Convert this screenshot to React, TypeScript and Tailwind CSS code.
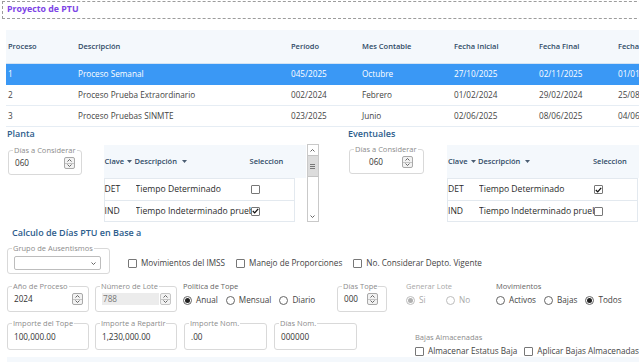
import type { ReactNode } from "react";

// Pantalla "Proyecto de PTU": lista de procesos arriba, parámetros de cálculo abajo.

const procesos = [
  { id: "1", desc: "Proceso Semanal", periodo: "045/2025", mes: "Octubre", ini: "27/10/2025", fin: "02/11/2025", pago: "01/01/2026" },
  { id: "2", desc: "Proceso Prueba Extraordinario", periodo: "002/2024", mes: "Febrero", ini: "01/02/2024", fin: "29/02/2024", pago: "25/08/2024" },
  { id: "3", desc: "Proceso Pruebas SINMTE", periodo: "023/2025", mes: "Junio", ini: "02/06/2025", fin: "08/06/2025", pago: "04/06/2025" },
];

function Chevron({ up }: { up?: boolean }) {
  return (
    <svg width="5" height="3" viewBox="0 0 5 3" className="block">
      <path d={up ? "M0.5 2.5 L2.5 0.5 L4.5 2.5" : "M0.5 0.5 L2.5 2.5 L4.5 0.5"} fill="none" stroke="#555" strokeWidth="0.9" />
    </svg>
  );
}

function Spinner({ className = "" }: { className?: string }) {
  return (
    <div className={`flex h-[12px] w-[11px] shrink-0 flex-col rounded-[2px] border border-[#a9a9a9] bg-[#f2f2f2] ${className}`}>
      <div className="flex flex-1 items-center justify-center border-b border-[#c4c4c4]">
        <Chevron up />
      </div>
      <div className="flex flex-1 items-center justify-center">
        <Chevron />
      </div>
    </div>
  );
}

function Field({ label, className = "", children }: { label: string; className?: string; children: ReactNode }) {
  return (
    <fieldset className={`shrink-0 rounded-[3px] border border-[#d9d9d9] px-[4px] ${className}`}>
      <legend className="whitespace-nowrap px-[1px] text-[7.5px] leading-[10px] text-[#8c8c8c]">{label}</legend>
      <div className="flex items-center pl-[2px] pt-[2px]">{children}</div>
    </fieldset>
  );
}

function Check({ checked, label }: { checked?: boolean; label?: string }) {
  return (
    <span className="flex shrink-0 items-center gap-[4px]">
      <span className="flex h-[9px] w-[9px] items-center justify-center rounded-[1px] border border-[#777] bg-white">
        {checked && (
          <svg width="7" height="6" viewBox="0 0 7 6">
            <path d="M0.8 3 L2.7 4.9 L6.2 0.8" fill="none" stroke="#111" strokeWidth="1.3" />
          </svg>
        )}
      </span>
      {label && <span className="text-[#444]">{label}</span>}
    </span>
  );
}

function Radio({ checked, disabled, label, className = "" }: { checked?: boolean; disabled?: boolean; label: string; className?: string }) {
  return (
    <span className={`flex shrink-0 items-center gap-[4px] ${className}`}>
      <span
        className={`flex h-[9px] w-[9px] items-center justify-center rounded-full border bg-white ${
          disabled ? "border-[#bdbdbd]" : "border-[#666]"
        }`}
      >
        {checked && <span className={`h-[5px] w-[5px] rounded-full ${disabled ? "bg-[#b0b0b0]" : "bg-[#222]"}`} />}
      </span>
      <span className={disabled ? "text-[#a8a8a8]" : "text-[#444]"}>{label}</span>
    </span>
  );
}

function Caret() {
  return (
    <svg width="5" height="3" viewBox="0 0 5 3" className="ml-[3px] inline-block">
      <path d="M0 0 H5 L2.5 3 Z" fill="#4a5d72" />
    </svg>
  );
}

function TipoGrid({ sel, header }: { sel: [boolean, boolean]; header: string }) {
  const rows = [
    { clave: "DET", desc: "Tiempo Determinado" },
    { clave: "IND", desc: "Tiempo Indeterminado prueba" },
  ];
  return (
    <div className={`mt-[1px] shrink-0 ${header}`}>
      <div className="flex h-[33px] items-center bg-[#f4f8fc] text-[7.5px] font-semibold text-[#2f4a66]">
        <span className="flex w-[31px] shrink-0 items-center pl-[1px]">
          Clave
          <Caret />
        </span>
        <span className="flex w-[115px] shrink-0 items-center">
          Descripción
          <span className="ml-[2px]" />
          <Caret />
        </span>
        <span>Seleccion</span>
      </div>
      <div className="w-[191px] border border-[#e3e9ef] text-[8.6px] text-[#2b2b2b]">
        {rows.map((r, i) => (
          <div key={r.clave} className={`flex h-[21px] items-center ${i > 0 ? "border-t border-[#e3e9ef]" : ""}`}>
            <span className="w-[31px] shrink-0">{r.clave}</span>
            <span className="w-[115px] shrink-0 overflow-hidden whitespace-nowrap">{r.desc}</span>
            <Check checked={sel[i]} />
          </div>
        ))}
      </div>
    </div>
  );
}

export default function App() {
  return (
    <div className="h-[362px] w-[639px] overflow-hidden bg-white font-['Open_Sans',sans-serif] text-[8.2px] text-[#333]">
      <div className="ml-[2px] mt-[1px] flex h-[18px] w-[660px] items-center border border-dashed border-[#9c9c9c] pl-[4px] text-[8.8px] font-bold text-[#7d44e6]">
        Proyecto de PTU
      </div>

      <div className="ml-[6px] mt-[11px] w-[700px]">
        <div className="flex h-[34px] items-center border-b border-[#d3e3f3] bg-[#f4f8fc] text-[7.5px] font-semibold text-[#2f4a66]">
          <span className="w-[72px] shrink-0 pl-[2px]">Proceso</span>
          <span className="w-[213px] shrink-0">Descripción</span>
          <span className="w-[71px] shrink-0">Período</span>
          <span className="w-[92px] shrink-0">Mes Contable</span>
          <span className="w-[85px] shrink-0">Fecha Inicial</span>
          <span className="w-[79px] shrink-0">Fecha Final</span>
          <span className="shrink-0">Fecha Pago</span>
        </div>
        {procesos.map((p, i) => (
          <div
            key={p.id}
            className={`flex h-[21px] items-center border-b ${
              i === 0 ? "border-[#3a98f5] bg-[#3a98f5] text-white" : "border-[#e6edf4] text-[#444]"
            }`}
          >
            <span className="w-[72px] shrink-0 pl-[2px]">{p.id}</span>
            <span className="w-[213px] shrink-0">{p.desc}</span>
            <span className="w-[71px] shrink-0">{p.periodo}</span>
            <span className="w-[92px] shrink-0">{p.mes}</span>
            <span className="w-[85px] shrink-0">{p.ini}</span>
            <span className="w-[79px] shrink-0">{p.fin}</span>
            <span className="shrink-0">{p.pago}</span>
          </div>
        ))}
      </div>

      <div className="flex h-[96px]">
        <div className="w-[330px] shrink-0 pl-[7px]">
          <div className="h-[13px] text-[9px] font-semibold leading-[13px] text-[#2d5d8c]">Planta</div>
          <div className="mt-[4px] flex items-start">
            <Field label="Días a Considerar" className="ml-[1px] mt-[1px] h-[30px] w-[73px]">
              <span className="flex-1">060</span>
              <Spinner className="mr-[2px]" />
            </Field>
            <div className="ml-[22px]">
              <TipoGrid sel={[false, true]} header="w-[202px]" />
            </div>
            <div className="ml-[1px] flex h-[78px] w-[12px] shrink-0 flex-col border border-[#c9c9c9] bg-white">
              <div className="flex h-[10px] items-center justify-center">
                <Chevron up />
              </div>
              <div className="flex h-[22px] flex-col items-center justify-center gap-[1px] border-y border-[#c4c4c4] bg-[#dcdcdc]">
                <span className="h-px w-[5px] bg-[#777]" />
                <span className="h-px w-[5px] bg-[#777]" />
                <span className="h-px w-[5px] bg-[#777]" />
              </div>
              <div className="flex-1" />
              <div className="flex h-[9px] items-center justify-center">
                <Chevron />
              </div>
            </div>
          </div>
        </div>
        <div className="ml-[18px] flex-1">
          <div className="h-[13px] text-[9px] font-semibold leading-[13px] text-[#2d5d8c]">Eventuales</div>
          <div className="mt-[4px] flex items-start">
            <Field label="Días a Considerar" className="ml-[1px] h-[30px] w-[75px]">
              <span className="flex-1 pl-[13px]">060</span>
              <Spinner className="mr-[6px]" />
            </Field>
            <div className="ml-[23px]">
              <TipoGrid sel={[true, false]} header="w-[200px]" />
            </div>
          </div>
        </div>
      </div>

      <div className="pl-[7px]">
        <div className="ml-[5px] mt-[3px] h-[13px] text-[9px] font-semibold leading-[13px] text-[#2d5d8c]">
          Calculo de Días PTU en Base a
        </div>

        <div className="mt-[4px] flex h-[31px] items-start">
          <Field label="Grupo de Ausentismos" className="h-[31px] w-[103px]">
            <div className="mt-[1px] flex h-[14px] w-[87px] items-center justify-end rounded-[2px] border border-[#bdbdbd] bg-white pr-[4px]">
              <Chevron />
            </div>
          </Field>
          <div className="ml-[18px] mt-[14px] flex gap-[11px]">
            <Check label="Movimientos del IMSS" />
            <Check label="Manejo de Proporciones" />
            <Check label="No. Considerar Depto. Vigente" />
          </div>
        </div>

        <div className="mt-[7px] flex h-[31px] items-start">
          <Field label="Año de Proceso" className="h-[31px] w-[82px]">
            <span className="flex-1">2024</span>
            <Spinner className="mr-[1px]" />
          </Field>
          <Field label="Número de Lote" className="ml-[6px] h-[31px] w-[82px]">
            <span className="flex h-[12px] w-[57px] items-center bg-[#ececec] pl-[1px] text-[#777]">788</span>
            <Spinner className="ml-[1px] border-[#c7c7c7]" />
          </Field>
          <div className="ml-[6px] w-[154px] shrink-0">
            <div className="h-[10px] text-[7.5px] leading-[10px] text-[#666]">Politica de Tope</div>
            <div className="mt-[3px] flex gap-[8px]">
              <Radio checked label="Anual" />
              <Radio label="Mensual" />
              <Radio label="Diario" />
            </div>
          </div>
          <Field label="Días Tope" className="h-[31px] w-[50px]">
            <span className="flex-1">000</span>
            <Spinner className="mr-[4px]" />
          </Field>
          <div className="ml-[19px] w-[90px] shrink-0">
            <div className="h-[10px] text-[7.5px] leading-[10px] text-[#a8a8a8]">Generar Lote</div>
            <div className="mt-[3px] flex">
              <Radio checked disabled label="Si" className="w-[40px]" />
              <Radio disabled label="No" />
            </div>
          </div>
          <div className="shrink-0">
            <div className="h-[10px] text-[7.5px] leading-[10px] text-[#666]">Movimientos</div>
            <div className="mt-[3px] flex gap-[8px]">
              <Radio label="Activos" />
              <Radio label="Bajas" />
              <Radio checked label="Todos" />
            </div>
          </div>
        </div>

        <div className="mt-[6px] flex h-[32px] items-start">
          <Field label="Importe del Tope" className="h-[32px] w-[82px]">
            <span className="pt-[1px]">100,000.00</span>
          </Field>
          <Field label="Importe a Repartir" className="ml-[6px] h-[32px] w-[82px]">
            <span className="pt-[1px]">1,230,000.00</span>
          </Field>
          <Field label="Importe Nom." className="ml-[7px] h-[32px] w-[83px]">
            <span className="pt-[1px]">.00</span>
          </Field>
          <Field label="Días Nom." className="ml-[7px] h-[32px] w-[83px]">
            <span className="pt-[1px]">000000</span>
          </Field>
          <div className="ml-[58px] mt-[14px] shrink-0">
            <div className="h-[10px] text-[7.5px] leading-[10px] text-[#8c8c8c]">Bajas Almacenadas</div>
            <div className="mt-[3px] flex gap-[7px]">
              <Check label="Almacenar Estatus Baja" />
              <Check label="Aplicar Bajas Almacenadas" />
            </div>
          </div>
        </div>

        <div className="mt-[7px] h-[8px] bg-[#f4f8fc]" />
      </div>
    </div>
  );
}
